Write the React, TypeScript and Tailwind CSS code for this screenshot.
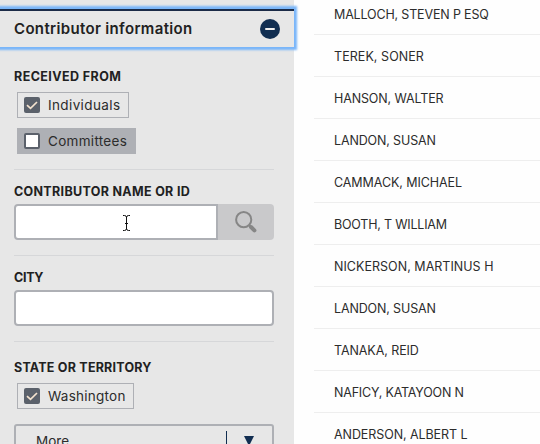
import type { ReactNode } from "react";

const contributors = [
  { name: "MALLOCH, STEVEN P ESQ", tracking: "tracking-[-0.16px]" },
  { name: "TEREK, SONER", tracking: "tracking-[0.06px]" },
  { name: "HANSON, WALTER", tracking: "tracking-[-0.12px]" },
  { name: "LANDON, SUSAN", tracking: "tracking-[-0.14px]" },
  { name: "CAMMACK, MICHAEL", tracking: "tracking-[-0.08px]" },
  { name: "BOOTH, T WILLIAM", tracking: "tracking-[-0.2px]" },
  { name: "NICKERSON, MARTINUS H", tracking: "tracking-[0.03px]" },
  { name: "LANDON, SUSAN", tracking: "tracking-[-0.14px]" },
  { name: "TANAKA, REID", tracking: "tracking-[-0.08px]" },
  { name: "NAFICY, KATAYOON N", tracking: "tracking-[-0.2px]" },
  { name: "ANDERSON, ALBERT L", tracking: "tracking-[-0.08px]" },
];

function Label({ children, className }: { children: ReactNode; className: string }) {
  return (
    <div className="flex h-4 items-center whitespace-nowrap text-[12.5px] font-bold leading-4 text-[#212121]">
      <span className={className}>{children}</span>
    </div>
  );
}

function Option({ text, checked, box, className }: { text: string; checked: boolean; box: string; className: string }) {
  return (
    <label className={`ml-[3px] flex h-[26px] items-center border border-[#aeb0b5] pl-1.5 ${box}`}>
      <span
        className={`flex size-4 shrink-0 items-center justify-center rounded-[2px] ${
          checked ? "bg-[#5b616b]" : "border-2 border-[#5b616b] bg-white"
        }`}
      >
        {checked && (
          <svg width="12" height="9" viewBox="0 0 12 9" fill="none" stroke="#f4e3cf" strokeWidth="1.7">
            <path d="M1 4.2 4.5 7.4 11 1" />
          </svg>
        )}
      </span>
      <span className={`ml-2 whitespace-nowrap text-[13.5px] leading-4 text-[#2c2c2c] ${className}`}>{text}</span>
    </label>
  );
}

export default function App() {
  return (
    <div className="flex h-[444px] w-[540px] overflow-hidden bg-[#fefefe] font-['Inter','Liberation_Sans',sans-serif]">
      <aside className="h-full w-[294px] shrink-0 bg-[#e7e7e7] pt-[9px]">
        <button className="relative flex h-[38px] w-full items-center justify-between border-t-2 border-[#1b2b47] pl-3.5 pr-3.5 shadow-[0_0_2px_3px_#7ab6f9]">
          <span className="whitespace-nowrap text-[15px] font-semibold leading-5 tracking-[0.34px] text-[#212121]">
            Contributor information
          </span>
          <span className="flex size-5 items-center justify-center rounded-full bg-[#112e51]">
            <span className="h-0.5 w-2.5 rounded-sm bg-[#eeeeee]" />
          </span>
        </button>

        <div className="pl-3.5 pr-5">
          <section className="h-[123px] border-b border-[#d6d7d9] pt-[22px]">
            <Label className="tracking-[0.42px]">RECEIVED FROM</Label>
            <div className="mt-[7px] flex flex-col gap-2.5">
              <Option text="Individuals" checked box="w-28" className="tracking-[0.38px]" />
              <Option text="Committees" checked={false} box="w-[119px] bg-[#aeb0b5]" className="tracking-[0.3px]" />
            </div>
          </section>

          <section className="h-[86px] border-b border-[#d6d7d9] pt-3.5">
            <Label className="tracking-[0.32px]">CONTRIBUTOR NAME OR ID</Label>
            <div className="mt-1 flex h-9">
              <div className="flex w-[204px] items-center rounded-l-[4px] border-2 border-[#aeb0b5] bg-white pl-[107px] pt-px">
                <svg width="7" height="16" viewBox="0 0 7 16" fill="none" stroke="#111" strokeWidth="1">
                  <path d="M0 .5H1.5Q3.5 .5 3.5 2.5Q3.5 .5 5.5 .5H7M3.5 2V14M0 15.5H1.5Q3.5 15.5 3.5 13.5Q3.5 15.5 5.5 15.5H7M2 8.5H5" />
                </svg>
              </div>
              <div className="flex w-14 items-center justify-center rounded-r-[4px] bg-[#c9c9cb]">
                <svg width="22" height="22" viewBox="0 0 22 22" fill="none" stroke="#868686">
                  <circle cx="8.7" cy="8.7" r="7.6" strokeWidth="2" />
                  <path d="M14 14 15.5 15.5" strokeWidth="2.4" />
                  <path d="M16 16 19.4 19.4" strokeWidth="4" strokeLinecap="round" />
                </svg>
              </div>
            </div>
          </section>

          <section className="h-[86px] border-b border-[#d6d7d9] pt-3.5">
            <Label className="tracking-[-0.3px]">CITY</Label>
            <div className="mt-1 h-9 rounded-[4px] border-2 border-[#aeb0b5] bg-white" />
          </section>

          <section className="pt-[18px]">
            <Label className="tracking-[0.22px]">STATE OR TERRITORY</Label>
            <div className="mt-[7px]">
              <Option text="Washington" checked box="w-[117px]" className="tracking-[0.25px]" />
            </div>
            <button className="mt-[15px] flex h-9 w-full items-start rounded-[3px] border-2 border-[#aeb0b5] pl-5 pt-[5px] text-[13.5px] leading-4 text-[#2c2c2c]">
              <span className="mt-[2px] w-[190px] text-left">More</span>
              <span className="h-6 w-px bg-[#112e51]" />
              <svg className="ml-[17px] mt-[5px]" width="10" height="10" viewBox="0 0 10 10">
                <path d="M0 0H10L5 10Z" fill="#112e51" />
              </svg>
            </button>
          </section>
        </div>
      </aside>

      <main className="-mt-[7px] flex-1 pl-5">
        {contributors.map((row, i) => (
          <div
            key={i}
            className="flex h-[42px] items-center whitespace-nowrap border-b border-[#eeeeee] pl-5 pt-0.5 text-[12.5px] leading-4 text-[#2c2c2c]"
          >
            <span className={row.tracking}>{row.name}</span>
          </div>
        ))}
      </main>
    </div>
  );
}
